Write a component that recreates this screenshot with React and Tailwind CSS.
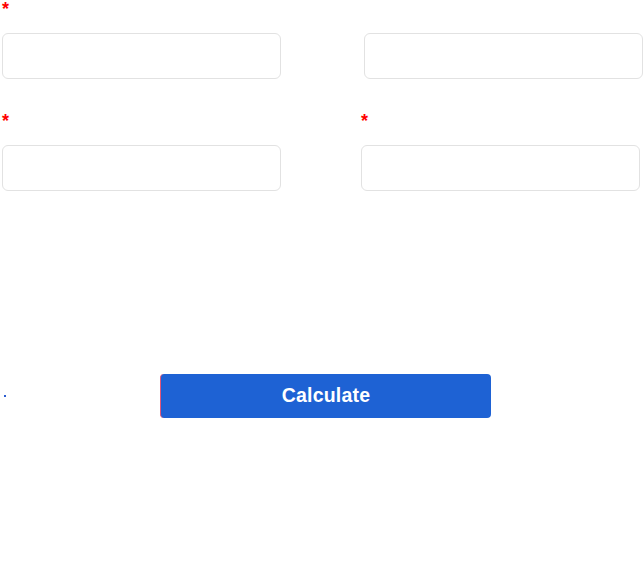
import React from 'react';

const Star = () => (
    <span className="block text-[18px] leading-[18px] font-bold text-[#ff0000]">*</span>
);

const Field = ({ className = '' }) => (
    <input
        type="text"
        className={`block h-[46px] w-[279px] rounded-[6px] border border-[#e2e2e2] bg-white outline-none ${className}`}
    />
);

export default function App() {
    return (
        <div className="w-[644px] h-[582px] bg-white font-['Liberation_Sans',Arial,sans-serif]">
            <div className="flex pl-[2px]">
                <div className="w-[279px]">
                    <div className="h-[33px]"><Star /></div>
                    <Field />
                </div>
                <div className="ml-[83px] w-[279px]">
                    <div className="h-[33px]"></div>
                    <Field />
                </div>
            </div>

            <div className="flex pl-[2px] mt-[33px]">
                <div className="w-[279px]">
                    <div className="h-[33px]"><Star /></div>
                    <Field />
                </div>
                <div className="ml-[80px] w-[279px]">
                    <div className="h-[33px]"><Star /></div>
                    <Field />
                </div>
            </div>

            <div className="flex items-center mt-[183px]">
                <span className="ml-[4px] block h-[2px] w-[2px] bg-[#2a5bd0]"></span>
                <button
                    type="button"
                    className="ml-[154px] h-[44px] w-[331px] rounded-[4px] border-l border-l-[#e4577a] bg-[#1e62d4] text-white text-[19.5px] font-bold tracking-[0.2px]"
                >
                    Calculate
                </button>
            </div>
        </div>
    );
}
